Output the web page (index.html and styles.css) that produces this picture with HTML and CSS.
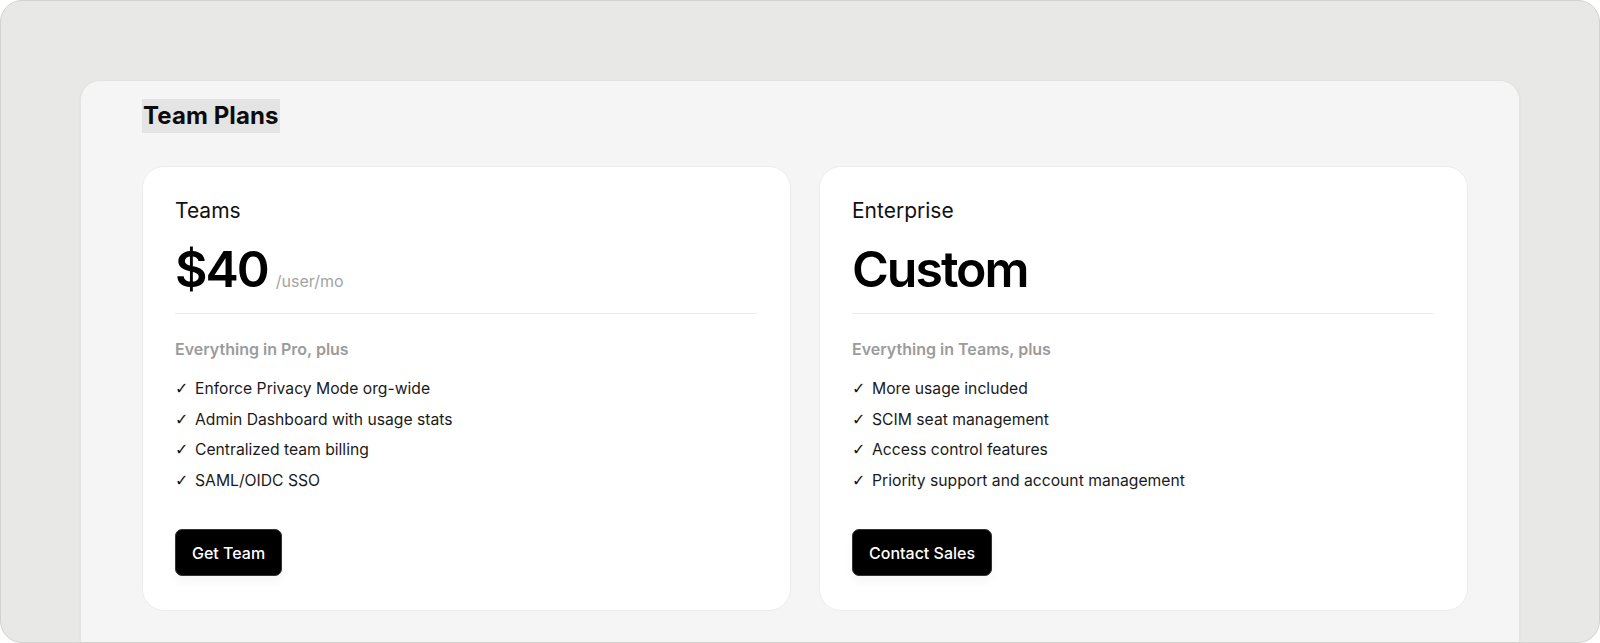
FILE: index.html
```html
<!DOCTYPE html>
<html lang="en">
<head>
<meta charset="utf-8">
<title>Team Plans</title>
<link rel="stylesheet" href="styles.css">
</head>
<body>
<div class="frame">
  <section class="panel">
    <h2 class="heading">Team Plans</h2>
    <div class="cards">
      <article class="card">
        <div class="plan-name">Teams</div>
        <div class="price-row"><span class="price">$40</span><span class="unit">/user/mo</span></div>
        <hr class="divider">
        <div class="lead">Everything in Pro, plus</div>
        <ul class="features">
          <li><span class="check">✓</span>Enforce Privacy Mode org-wide</li>
          <li><span class="check">✓</span>Admin Dashboard with usage stats</li>
          <li><span class="check">✓</span>Centralized team billing</li>
          <li><span class="check">✓</span>SAML/OIDC SSO</li>
        </ul>
        <button class="btn">Get Team</button>
      </article>
      <article class="card">
        <div class="plan-name">Enterprise</div>
        <div class="price-row"><span class="price">Custom</span></div>
        <hr class="divider">
        <div class="lead">Everything in Teams, plus</div>
        <ul class="features">
          <li><span class="check">✓</span>More usage included</li>
          <li><span class="check">✓</span>SCIM seat management</li>
          <li><span class="check">✓</span>Access control features</li>
          <li><span class="check">✓</span>Priority support and account management</li>
        </ul>
        <button class="btn">Contact Sales</button>
      </article>
    </div>
  </section>
</div>
</body>
</html>
```

FILE: styles.css
```css
* { box-sizing: border-box; }
html, body { margin: 0; padding: 0; background: #ffffff; }
body {
  font-family: Inter, "Noto Sans", "Liberation Sans", sans-serif;
  color: #111;
  width: 1600px;
  height: 643px;
  overflow: hidden;
}
.frame {
  width: 1600px;
  height: 643px;
  background: #e8e8e6;
  border: 1px solid #d2d2d0;
  border-radius: 22px;
  padding: 79px 79px 0 79px;
  overflow: hidden;
}
.panel {
  width: 1440px;
  height: 600px;
  background: #f5f5f5;
  border: 1px solid #e2e2e2;
  border-radius: 20px 20px 0 0;
  box-shadow: 0 1px 3px rgba(0,0,0,0.05);
  padding: 18px 51px 0 61px;
}
.heading {
  display: inline-block;
  margin: 0;
  background: #e4e4e4;
  font-size: 24px;
  font-weight: 700;
  line-height: 34px;
  letter-spacing: 0.1px;
  padding: 0 1px;
  color: #0c0c0c;
}
.cards {
  margin-top: 33px;
  display: grid;
  grid-template-columns: 1fr 1fr;
  gap: 28px;
}
.card {
  background: #ffffff;
  border: 1px solid #ececec;
  border-radius: 22px;
  height: 445px;
  padding: 31px 33px 0 32px;
}
.plan-name {
  font-size: 21px;
  line-height: 26px;
  font-weight: 400;
  color: #111;
}
.price-row {
  margin-top: 17px;
  display: flex;
  align-items: baseline;
  gap: 8px;
  height: 56px;
}
.price {
  font-size: 50px;
  font-weight: 600;
  letter-spacing: -2px;
  line-height: 56px;
  color: #000;
}
.unit {
  font-size: 16px;
  color: #a3a3a3;
}
.divider {
  border: 0;
  border-top: 1px solid #ececec;
  margin: 16px 0 0 0;
}
.lead {
  margin-top: 25px;
  font-size: 16px;
  font-weight: 600;
  color: #9b9b9b;
  line-height: 20px;
}
.features {
  list-style: none;
  margin: 15px 0 0 0;
  padding: 0;
}
.features li {
  display: flex;
  align-items: center;
  height: 30.6px;
  font-size: 15.7px;
  line-height: 20px;
  color: #1a1a1a;
}
.check {
  flex: 0 0 20px;
  font-family: "DejaVu Sans", sans-serif;
  font-size: 16px;
  line-height: 20px;
  color: #111;
}
.btn {
  margin-top: 33px;
  background: #000;
  color: #fff;
  border: 1px solid #333;
  border-radius: 7px;
  height: 47px;
  padding: 0 16px;
  font-family: inherit;
  font-size: 16px;
  font-weight: 500;
  box-shadow: 0 6px 10px rgba(0,0,0,0.04);
}
```
